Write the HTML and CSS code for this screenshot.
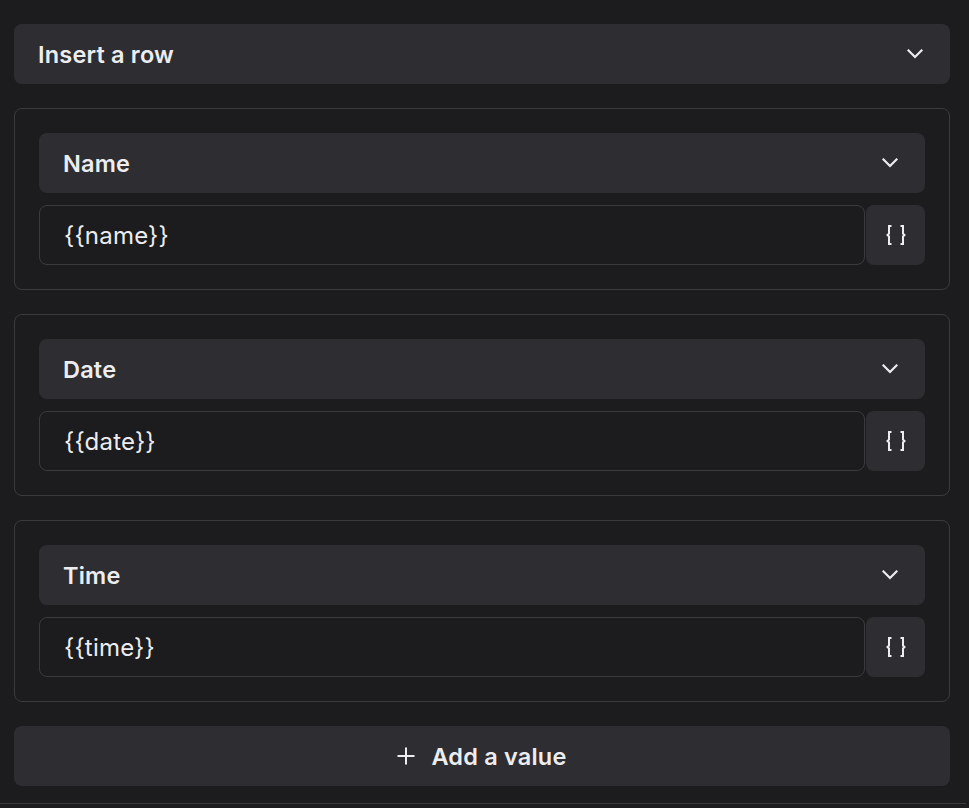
FILE: index.html
```html
<!DOCTYPE html>
<html>
<head>
<meta charset="utf-8">
<link rel="stylesheet" href="styles.css">
</head>
<body>
<div class="panel">
  <div class="select top">
    <span class="label">Insert a row</span>
    <svg class="chev" width="16" height="10" viewBox="0 0 16 10"><path d="M1.5 1.5 L8 8 L14.5 1.5" fill="none" stroke="#ededf0" stroke-width="2.2" stroke-linecap="square"/></svg>
  </div>

  <div class="card">
    <div class="select">
      <span class="label">Name</span>
      <svg class="chev" width="16" height="10" viewBox="0 0 16 10"><path d="M1.5 1.5 L8 8 L14.5 1.5" fill="none" stroke="#ededf0" stroke-width="2.2" stroke-linecap="square"/></svg>
    </div>
    <div class="row">
      <div class="input">{{name}}</div>
      <div class="brace"><svg width="22" height="20" viewBox="0 0 22 20"><path d="M6.5 1 H4 V8.5 L2.5 10 L4 11.5 V19 H6.5 M15.5 1 H18 V8.5 L19.5 10 L18 11.5 V19 H15.5" fill="none" stroke="#ededf0" stroke-width="2"/></svg></div>
    </div>
  </div>

  <div class="card">
    <div class="select">
      <span class="label">Date</span>
      <svg class="chev" width="16" height="10" viewBox="0 0 16 10"><path d="M1.5 1.5 L8 8 L14.5 1.5" fill="none" stroke="#ededf0" stroke-width="2.2" stroke-linecap="square"/></svg>
    </div>
    <div class="row">
      <div class="input">{{date}}</div>
      <div class="brace"><svg width="22" height="20" viewBox="0 0 22 20"><path d="M6.5 1 H4 V8.5 L2.5 10 L4 11.5 V19 H6.5 M15.5 1 H18 V8.5 L19.5 10 L18 11.5 V19 H15.5" fill="none" stroke="#ededf0" stroke-width="2"/></svg></div>
    </div>
  </div>

  <div class="card">
    <div class="select">
      <span class="label">Time</span>
      <svg class="chev" width="16" height="10" viewBox="0 0 16 10"><path d="M1.5 1.5 L8 8 L14.5 1.5" fill="none" stroke="#ededf0" stroke-width="2.2" stroke-linecap="square"/></svg>
    </div>
    <div class="row">
      <div class="input">{{time}}</div>
      <div class="brace"><svg width="22" height="20" viewBox="0 0 22 20"><path d="M6.5 1 H4 V8.5 L2.5 10 L4 11.5 V19 H6.5 M15.5 1 H18 V8.5 L19.5 10 L18 11.5 V19 H15.5" fill="none" stroke="#ededf0" stroke-width="2"/></svg></div>
    </div>
  </div>

  <div class="add">
    <svg width="18" height="18" viewBox="0 0 18 18"><path d="M9 0.5 V17.5 M0.5 9 H17.5" stroke="#ededf0" stroke-width="2"/></svg>
    <span class="label">Add a value</span>
  </div>
</div>
<div class="divider"></div>
</body>
</html>
```

FILE: styles.css
```css
* { box-sizing: border-box; }
html, body {
  margin: 0;
  padding: 0;
  background: #1c1b1e;
}
body {
  font-family: Inter, "Noto Sans", sans-serif;
  color: #ededf0;
  height: 808px;
  overflow: hidden;
}
.panel {
  padding: 24px 19px 0 14px;
  display: flex;
  flex-direction: column;
  gap: 24px;
}
.select {
  height: 60px;
  background: #2e2d31;
  border-radius: 8px;
  display: flex;
  align-items: center;
  justify-content: space-between;
  padding: 0 27px 0 24px;
}
.label {
  font-size: 23.5px;
  font-weight: 600;
  letter-spacing: 0.2px;
}
.chev { display: block; }
.card {
  border: 1px solid #3b3a3e;
  border-radius: 8px;
  padding: 24px;
  display: flex;
  flex-direction: column;
  gap: 12px;
}
.row {
  display: flex;
  gap: 1px;
  height: 60px;
}
.input {
  flex: 1;
  border: 1px solid #3b3a3e;
  border-radius: 8px;
  display: flex;
  align-items: center;
  padding-left: 24px;
  font-size: 24px;
  font-weight: 400;
  letter-spacing: 0.2px;
}
.brace {
  width: 59px;
  background: #2e2d31;
  border-radius: 8px;
  display: flex;
  align-items: center;
  justify-content: center;
}
.brace svg { display: block; }
.add {
  height: 60px;
  background: #2e2d31;
  border-radius: 8px;
  display: flex;
  align-items: center;
  justify-content: center;
  gap: 16px;
}
.add svg { display: block; }
.divider {
  margin-top: 17px;
  border-top: 1px solid #3b3a3e;
  margin-right: 3px;
}
```
